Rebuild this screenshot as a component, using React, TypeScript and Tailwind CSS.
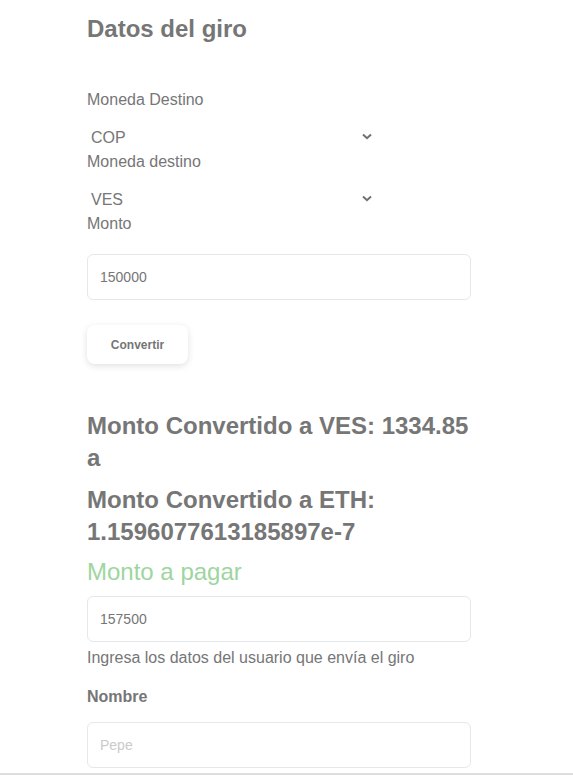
import React from "react";

function Chevron() {
  return (
    <svg width="10" height="7" viewBox="0 0 10 7" className="mb-[3px]">
      <polyline points="1,1.5 5,5.2 9,1.5" fill="none" stroke="#707070" strokeWidth="2" />
    </svg>
  );
}

function SelectRow({ value }: { value: string }) {
  return (
    <div className="mt-[14px] flex h-[24px] w-[290px] items-center justify-between pl-[4px] pr-[5px] text-[16px] leading-[24px] text-[#767676]">
      <span>{value}</span>
      <Chevron />
    </div>
  );
}

function Input({ value, placeholder, className }: { value?: string; placeholder?: string; className?: string }) {
  return (
    <div
      className={
        "flex h-[46px] w-[384px] items-center rounded-[6px] border border-[#e3e8ec] bg-white px-[12px] text-[14px] " +
        (className ?? "")
      }
    >
      {value ? (
        <span className="text-[#767676]">{value}</span>
      ) : (
        <span className="text-[#cacaca]">{placeholder}</span>
      )}
    </div>
  );
}

export default function App() {
  return (
    <div className="min-h-[775px] w-full bg-white" style={{ fontFamily: '"Liberation Sans", Arial, sans-serif' }}>
      <div className="ml-[87px] flex w-[384px] flex-col pt-[13px] text-[#767676]">
        <h2 className="text-[24px] font-bold leading-[32px]">Datos del giro</h2>
        <label className="mt-[43px] text-[16px] leading-[24px]">Moneda Destino</label>
        <SelectRow value="COP" />
        <label className="text-[16px] leading-[24px]">Moneda destino</label>
        <SelectRow value="VES" />
        <label className="text-[16px] leading-[24px]">Monto</label>
        <Input value="150000" className="mt-[18px]" />
        <button className="mt-[25px] flex h-[39px] w-[101px] items-center justify-center rounded-[8px] bg-white text-[12px] font-bold text-[#767676] shadow-[0_2px_7px_rgba(0,0,0,0.12)]">
          Convertir
        </button>
        <h3 className="mt-[46px] text-[24px] font-bold leading-[32px]">Monto Convertido a VES: 1334.85 a</h3>
        <h3 className="mt-[10px] text-[24px] font-bold leading-[32px]">Monto Convertido a ETH: 1.1596077613185897e-7</h3>
        <p className="mt-[8px] text-[24px] leading-[32px] text-[#9ed5a0]">Monto a pagar</p>
        <Input value="157500" className="mt-[8px]" />
        <p className="mt-[4px] text-[16px] leading-[24px]">Ingresa los datos del usuario que envía el giro</p>
        <label className="mt-[15px] text-[16px] font-bold leading-[24px]">Nombre</label>
        <Input placeholder="Pepe" className="mt-[13px]" />
      </div>
      <div className="mt-[5px] h-[2px] w-full bg-[#dedede]" />
    </div>
  );
}
